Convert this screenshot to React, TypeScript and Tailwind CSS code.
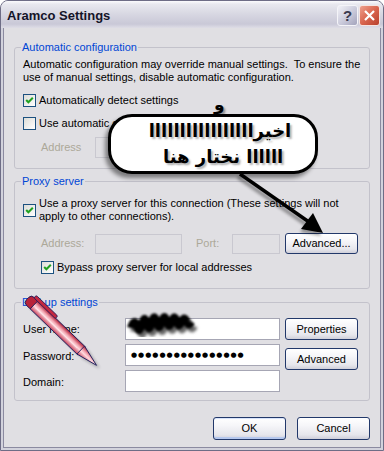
import React from "react";

/* ─── small XP widgets ─── */
function Box({ checked }: { checked?: boolean }) {
  return (
    <span className="flex h-[13px] w-[13px] shrink-0 items-center justify-center border border-[#1c5180] bg-[linear-gradient(135deg,#dcdcd7,#ffffff)]">
      {checked && (
        <svg width="9" height="9" viewBox="0 0 9 9">
          <path d="M1.2 4 L3.4 6.3 L7.8 1.8" fill="none" stroke="#21a121" strokeWidth="2" />
        </svg>
      )}
    </span>
  );
}

function Btn({
  children,
  className = "",
  isDefault,
}: {
  children: React.ReactNode;
  className?: string;
  isDefault?: boolean;
}) {
  return (
    <button
      className={`flex items-center justify-center rounded-[3px] border border-[#22386a] bg-[linear-gradient(to_bottom,#ffffff_0%,#f6f6f9_35%,#e6e6ec_80%,#cfcfd9_100%)] text-[11px] leading-none text-black ${
        isDefault ? "shadow-[inset_0_-2px_0_#b6c8ee,inset_0_1px_0_#d7e3fb]" : ""
      } ${className}`}
    >
      {children}
    </button>
  );
}

function Field({ className = "", disabled }: { className?: string; disabled?: boolean }) {
  return (
    <div
      className={`border ${
        disabled ? "border-[#c9c8d0] bg-[#e0dfe3]" : "border-[#a6a6b4] bg-white"
      } ${className}`}
    />
  );
}

function Group({
  title,
  className = "",
  children,
}: {
  title: string;
  className?: string;
  children: React.ReactNode;
}) {
  return (
    <fieldset className={`w-[356px] rounded-[3px] border border-[#c3c2cb] px-[8px] ${className}`}>
      <legend className="-ml-[2px] px-[1px] text-[11px] leading-[13px] text-[#0046d5]">{title}</legend>
      {children}
    </fieldset>
  );
}

/* ─── drawings laid over the dialog ─── */
const scribble =
  "M131 328 c2 -7 4 -8 6 -2 s3 5 5 -2 s3 -7 5 0 s3 5 5 -2 s3 -6 5 1 s3 4 5 -2 s3 -5 5 1 s3 4 5 -1 s3 -5 5 1 s3 3 5 -1 s3 -3 5 1 s3 2 4 0";

function Overlay() {
  return (
    <svg className="pointer-events-none absolute left-0 top-0" width="384" height="451">
      <defs>
        <filter id="soft" x="-20%" y="-20%" width="140%" height="140%">
          <feGaussianBlur stdDeviation="1.6" />
        </filter>
        <filter id="blob" x="-20%" y="-40%" width="140%" height="180%">
          <feGaussianBlur stdDeviation="1.1" />
        </filter>
        <linearGradient id="penBody" x1="0" y1="0" x2="0" y2="1">
          <stop offset="0" stopColor="#b01c34" />
          <stop offset="0.35" stopColor="#f3a7b2" />
          <stop offset="0.55" stopColor="#ffd9de" />
          <stop offset="1" stopColor="#c7405a" />
        </linearGradient>
      </defs>

      {/* arrow */}
      <g transform="translate(-2 3)" opacity="0.35" filter="url(#soft)">
        <line x1="240" y1="174" x2="309" y2="222" stroke="#000" strokeWidth="4" />
        <polygon points="323,233 302,229 313,214" fill="#000" />
      </g>
      <line x1="240" y1="174" x2="309" y2="222" stroke="#000" strokeWidth="3.5" />
      <polygon points="323,233 301,229 313,213" fill="#000" />

      {/* scribbled user name */}
      <path d={scribble} fill="none" stroke="#666" strokeWidth="8" transform="translate(3 4)" filter="url(#soft)" />
      <path d={scribble} fill="none" stroke="#000" strokeWidth="8" filter="url(#blob)" />

      {/* pen */}
      <g transform="translate(66 336) rotate(44)" opacity="0.3" filter="url(#soft)">
        <rect x="-48" y="-5" width="74" height="10" rx="4" fill="#000" />
        <polygon points="26,-5 47,0 26,5" fill="#000" />
      </g>
      <g transform="translate(62 332) rotate(44)">
        <rect x="-48" y="-5.5" width="12" height="11" rx="4" fill="#b8233a" stroke="#1c1c5c" strokeWidth="0.9" />
        <rect x="-39" y="-5.5" width="66" height="11" fill="url(#penBody)" stroke="#1c1c5c" strokeWidth="0.9" />
        <polygon points="26,-5.5 48,0 26,5.5" fill="url(#penBody)" stroke="#1c1c5c" strokeWidth="0.9" />
        <rect x="-44" y="-8.5" width="30" height="3.5" rx="1.5" fill="#c42840" stroke="#1c1c5c" strokeWidth="0.8" />
        <line x1="-36" y1="1" x2="22" y2="1" stroke="#fff" strokeOpacity="0.5" strokeWidth="1" />
      </g>
    </svg>
  );
}

function Bubble() {
  return (
    <>
      <span className="absolute left-[214px] top-[96px] font-['DejaVu_Sans',sans-serif] text-[17px] font-bold leading-none text-black [text-shadow:2px_2px_2px_rgba(0,0,0,0.35)]">
        و
      </span>
      <div className="absolute left-[108px] top-[114px] flex h-[60px] w-[210px] flex-col items-center justify-center rounded-[24px] border-[3px] border-black bg-white shadow-[-3px_4px_4px_rgba(0,0,0,0.45)]">
        <div
          dir="rtl"
          className="font-['DejaVu_Sans',sans-serif] text-[18px] font-bold leading-[26px] text-black [text-shadow:2px_2px_2px_rgba(0,0,0,0.3)]"
        >
          <div className="pl-[14px]">اخيرااااااااااااااااا</div>
          <div className="pr-[8px]">اااااا نختار هنا</div>
        </div>
      </div>
    </>
  );
}

export default function App() {
  return (
    <div className="relative h-[451px] w-[384px] font-['Liberation_Sans',Arial,sans-serif] text-[11px] leading-[13px] text-black">
      <div className="flex h-full flex-col overflow-hidden rounded-t-[8px] border border-[#6e6d86] bg-[#d2d2dc]">
        {/* title bar */}
        <div className="flex h-[27px] shrink-0 items-start bg-[linear-gradient(to_bottom,#fbfbfd_0%,#e8e8ef_12%,#d9d9e3_45%,#c9c8d7_85%,#dedde6_100%)] pl-[6px] pr-[3px]">
          <span className="mt-[7px] font-['Liberation_Sans',Arial,sans-serif] text-[13px] font-bold leading-[15px] text-[#141428]">
            Aramco Settings
          </span>
          <div className="ml-auto mt-[4px] flex gap-[1px]">
            <div className="flex h-[21px] w-[21px] items-center justify-center rounded-[3px] border border-[#f4f4f8] bg-[linear-gradient(135deg,#f2f2f7_0%,#c9c9da_55%,#a3a3bb_100%)] text-[15px] font-bold leading-none text-[#3a3a4e]">
              ?
            </div>
            <div className="flex h-[21px] w-[21px] items-center justify-center rounded-[3px] border border-[#f4e4e0] bg-[linear-gradient(135deg,#eea08e_0%,#d9654e_50%,#b8402c_100%)]">
              <svg width="11" height="11" viewBox="0 0 11 11">
                <path d="M1 1 L10 10 M10 1 L1 10" stroke="#fff" strokeWidth="2.2" />
              </svg>
            </div>
          </div>
        </div>

        {/* dialog body */}
        <div className="mx-[2px] mb-[2px] flex flex-1 flex-col border border-t-0 border-[#8b8aa0] bg-[#e0dfe3] pl-[10px] pt-[13px]">
          <Group title="Automatic configuration" className="pb-[10px] pt-[4px]">
            <p className="whitespace-pre">
              {"Automatic configuration may override manual settings.  To ensure the\nuse of manual settings, disable automatic configuration."}
            </p>
            <div className="mt-[10px] flex h-[13px] items-center gap-[3px]">
              <Box checked />
              <span>Automatically detect settings</span>
            </div>
            <div className="mt-[10px] flex h-[13px] items-center gap-[3px]">
              <Box />
              <span>Use automatic configuration script</span>
            </div>
            <div className="mt-[7px] flex h-[21px] items-center pl-[18px]">
              <span className="w-[54px] text-[#aca899]">Address</span>
              <Field disabled className="h-[21px] w-[190px]" />
            </div>
          </Group>

          <Group title="Proxy server" className="mt-[6px] pb-[14px] pt-[9px]">
            <div className="flex items-center gap-[3px]">
              <Box checked />
              <span>
                Use a proxy server for this connection (These settings will not
                <br />
                apply to other connections).
              </span>
            </div>
            <div className="mt-[10px] flex h-[21px] items-center pl-[18px]">
              <span className="w-[54px] text-[#aca899]">Address:</span>
              <Field disabled className="h-[20px] w-[87px]" />
              <span className="ml-[14px] w-[36px] text-[#aca899]">Port:</span>
              <Field disabled className="h-[20px] w-[48px]" />
              <Btn className="ml-[5px] h-[21px] w-[73px]">Advanced...</Btn>
            </div>
            <div className="mt-[7px] flex h-[13px] items-center gap-[3px] pl-[18px]">
              <Box checked />
              <span>Bypass proxy server for local addresses</span>
            </div>
          </Group>

          <Group title="Dial-up settings" className="mt-[7px] pb-[8px] pt-[9px]">
            <div className="flex">
              <div className="flex w-[102px] flex-col gap-[4px]">
                <span className="flex h-[22px] items-center">User name:</span>
                <span className="flex h-[22px] items-center pt-[3px]">Password:</span>
                <span className="flex h-[22px] items-center pt-[2px]">Domain:</span>
              </div>
              <div className="flex flex-col gap-[4px]">
                <Field className="h-[22px] w-[155px]" />
                <div className="flex h-[22px] w-[155px] items-center border border-[#a6a6b4] bg-white pl-[5px] font-['DejaVu_Sans',sans-serif] text-[7px] tracking-[1px] text-black">
                  ●●●●●●●●●●●●●●●●
                </div>
                <Field className="h-[22px] w-[155px]" />
              </div>
              <div className="ml-[5px] flex flex-col gap-[8px]">
                <Btn className="h-[22px] w-[73px]">Properties</Btn>
                <Btn className="h-[22px] w-[73px]">Advanced</Btn>
              </div>
            </div>
          </Group>

          <div className="mt-[16px] flex w-[356px] justify-end gap-[11px]">
            <Btn isDefault className="h-[23px] w-[73px]">
              OK
            </Btn>
            <Btn className="h-[23px] w-[73px]">Cancel</Btn>
          </div>
        </div>
      </div>

      <Bubble />
      <Overlay />
    </div>
  );
}
